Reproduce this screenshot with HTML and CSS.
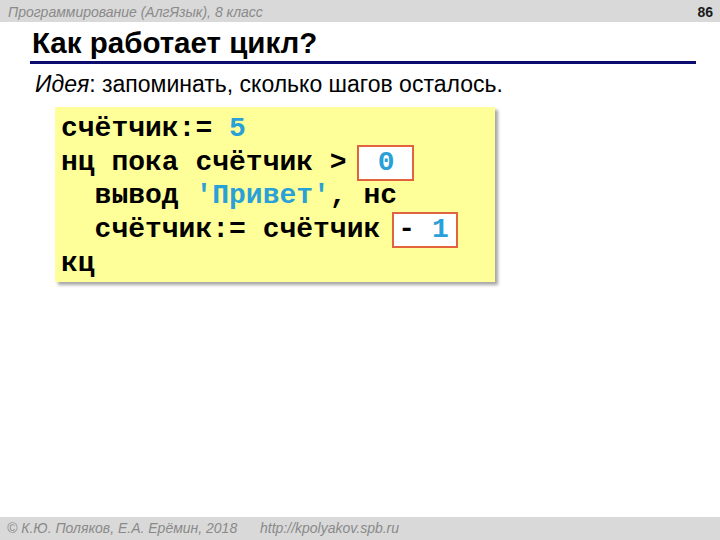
FILE: index.html
```html
<!DOCTYPE html>
<html lang="ru">
<head>
  <meta charset="UTF-8">
  <title>Как работает цикл?</title>
  <link rel="stylesheet" href="styles.css">
</head>
<body>
  <div class="slide">
    <div class="topbar">
      <span class="course">Программирование (АлгЯзык), 8 класс</span>
      <span class="page-num">86</span>
    </div>

    <div class="content">
      <h1 class="title">Как работает цикл?</h1>
      <p class="idea"><i>Идея</i>: запоминать, сколько шагов осталось.</p>

      <div class="code-box">
        <div class="code-line">счётчик:= <span class="lit">5</span></div>
        <div class="code-line">нц пока счётчик &gt;<span class="slot slot-zero"><span class="lit">0</span></span></div>
        <div class="code-line">  вывод <span class="lit">'Привет'</span>, нс</div>
        <div class="code-line">  счётчик:= счётчик<span class="slot slot-minus">- <span class="lit">1</span></span></div>
        <div class="code-line">кц</div>
      </div>
    </div>

    <div class="footer">
      <span class="footer-author">© К.Ю. Поляков, Е.А. Ерёмин, 2018</span>
      <span class="footer-link">http://kpolyakov.spb.ru</span>
    </div>
  </div>
</body>
</html>
```

FILE: styles.css
```css
* {
  margin: 0;
  padding: 0;
  box-sizing: border-box;
}

body {
  font-family: "Liberation Sans", Arial, sans-serif;
  background: #ffffff;
  color: #000000;
}

.slide {
  width: 720px;
  height: 540px;
  display: flex;
  flex-direction: column;
  overflow: hidden;
}

.topbar {
  height: 22px;
  background: #d9d9d9;
  display: flex;
  justify-content: space-between;
  align-items: center;
  padding: 1px 7px 0 8px;
  font-size: 14px;
  line-height: 22px;
}

.course {
  font-style: italic;
  color: #8a8a8a;
}

.page-num {
  font-weight: 700;
  color: #1a1a1a;
}

.content {
  flex: 1;
}

.title {
  margin: 4.5px 24px 0 30px;
  padding: 0 0 2.5px 2px;
  font-size: 29.5px;
  line-height: 32px;
  font-weight: 700;
  border-bottom: 3px solid #0b0b70;
}

.idea {
  margin-top: 7px;
  padding-left: 35px;
  font-size: 23px;
  line-height: 26px;
}

.code-box {
  width: 440px;
  margin: 10px 0 0 55px;
  padding: 5px 0 1px 6px;
  background: #ffff99;
  box-shadow: 3px 3px 3px rgba(0, 0, 0, 0.35);
  font-family: "Liberation Mono", "Courier New", monospace;
  font-weight: 700;
  font-size: 28px;
  line-height: 33.7px;
}

.code-line {
  white-space: pre;
}

.lit {
  color: #2aa0d8;
}

.slot {
  display: inline-block;
  margin: -2px 0 -2px 10px;
  border: 2px solid #e2643e;
  background: #ffffff;
  line-height: 32px;
}

.slot-zero {
  padding: 0 18px 0 19px;
}

.slot-minus {
  margin-left: 12px;
  padding: 0 7px 0 4px;
}

.footer {
  height: 23px;
  background: #d9d9d9;
  display: flex;
  align-items: center;
  padding-left: 7px;
  font-size: 14px;
  font-style: italic;
  color: #8a8a8a;
  line-height: 23px;
}

.footer-author {
  width: 253px;
}
```
